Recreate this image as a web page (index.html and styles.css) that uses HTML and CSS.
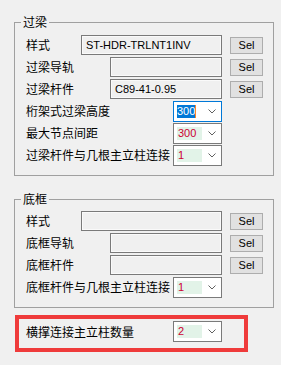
FILE: index.html
```html
<!DOCTYPE html>
<html lang="zh-CN">
<head>
    <meta charset="UTF-8">
    <title>过梁设置</title>
    <link rel="stylesheet" href="styles.css">
</head>
<body>
    <fieldset class="group">
        <legend>过梁</legend>
        <div class="row">
            <span class="label">样式</span>
            <div class="textbox wide">ST-HDR-TRLNT1INV</div>
            <button class="sel">Sel</button>
        </div>
        <div class="row">
            <span class="label">过梁导轨</span>
            <div class="textbox"></div>
            <button class="sel">Sel</button>
        </div>
        <div class="row">
            <span class="label">过梁杆件</span>
            <div class="textbox">C89-41-0.95</div>
            <button class="sel">Sel</button>
        </div>
        <div class="row">
            <span class="label">桁架式过梁高度</span>
            <div class="combo focused">
                <span class="value">300</span><span class="caret"></span>
                <svg class="arrow" width="8" height="5" viewBox="0 0 8 5"><path d="M0.5 0.5 L4 4 L7.5 0.5" fill="none" stroke="#606060" stroke-width="1"/></svg>
            </div>
        </div>
        <div class="row">
            <span class="label">最大节点间距</span>
            <div class="combo">
                <span class="value">300</span>
                <svg class="arrow" width="8" height="5" viewBox="0 0 8 5"><path d="M0.5 0.5 L4 4 L7.5 0.5" fill="none" stroke="#606060" stroke-width="1"/></svg>
            </div>
        </div>
        <div class="row">
            <span class="label">过梁杆件与几根主立柱连接</span>
            <div class="combo">
                <span class="value">1</span>
                <svg class="arrow" width="8" height="5" viewBox="0 0 8 5"><path d="M0.5 0.5 L4 4 L7.5 0.5" fill="none" stroke="#606060" stroke-width="1"/></svg>
            </div>
        </div>
    </fieldset>

    <fieldset class="group second">
        <legend>底框</legend>
        <div class="row">
            <span class="label">样式</span>
            <div class="textbox wide"></div>
            <button class="sel">Sel</button>
        </div>
        <div class="row">
            <span class="label">底框导轨</span>
            <div class="textbox"></div>
            <button class="sel">Sel</button>
        </div>
        <div class="row">
            <span class="label">底框杆件</span>
            <div class="textbox"></div>
            <button class="sel">Sel</button>
        </div>
        <div class="row">
            <span class="label">底框杆件与几根主立柱连接</span>
            <div class="combo">
                <span class="value">1</span>
                <svg class="arrow" width="8" height="5" viewBox="0 0 8 5"><path d="M0.5 0.5 L4 4 L7.5 0.5" fill="none" stroke="#606060" stroke-width="1"/></svg>
            </div>
        </div>
    </fieldset>

    <div class="highlight-box">
        <span class="label">横撑连接主立柱数量</span>
        <div class="combo">
            <span class="value">2</span>
            <svg class="arrow" width="8" height="5" viewBox="0 0 8 5"><path d="M0.5 0.5 L4 4 L7.5 0.5" fill="none" stroke="#606060" stroke-width="1"/></svg>
        </div>
    </div>
</body>
</html>
```

FILE: styles.css
```css
body {
    margin: 0;
    padding: 0 7px 0 14px;
    background-color: #f0f0f0;
    font-family: "Liberation Sans", "Noto Sans CJK SC", sans-serif;
    font-size: 12px;
    color: #000;
}
.group {
    margin: 14px 0 0 0;
    padding: 5px 10px 8px 11px;
    border: 1px solid #a0a0a0;
    min-width: 0;
}
/* 第二组框线低一像素 */
.group.second {
    margin-top: 15px;
    padding-top: 4px;
}
.group legend {
    margin-left: -5px;
    padding: 0 2px;
    line-height: 16px;
    font-family: "Noto Sans CJK SC", sans-serif;
}
.row {
    display: flex;
    align-items: flex-start;
    height: 22px;
}
.label {
    flex: 1;
    line-height: 20px;
    font-family: "Noto Sans CJK SC", sans-serif;
    white-space: nowrap;
}
.textbox {
    width: 112px;
    height: 20px;
    box-sizing: border-box;
    border: 1px solid #7a7a7a;
    box-shadow: inset 0 0 0 1px #fafafa;
    padding-left: 4px;
    font-size: 11px;
    line-height: 18px;
}
.textbox.wide {
    width: 141px;
}
.sel {
    width: 33px;
    height: 17px;
    margin: 2px 0 0 8px;
    padding: 0;
    background-color: #e1e1e1;
    border: 1px solid #adadad;
    font-family: "Liberation Sans", sans-serif;
    font-size: 11px;
    line-height: 15px;
    color: #000;
}
/* 下拉框 */
.combo {
    width: 49px;
    height: 21px;
    box-sizing: border-box;
    margin-right: 41px;
    border: 1px solid #7a7a7a;
    background-color: #fff;
    display: flex;
    align-items: center;
    padding-left: 3px;
}
.combo .value {
    width: 25px;
    height: 13px;
    background-color: #e2f3e8;
    color: #cc0033;
    font-size: 11px;
    line-height: 13px;
    padding-left: 1px;
    box-sizing: border-box;
}
.combo .arrow {
    margin-left: auto;
    margin-right: 5px;
}
.combo.focused {
    border-color: #0078d7;
}
.combo.focused .value {
    width: auto;
    background-color: #0078d7;
    color: #fff;
    padding-left: 0;
}
.combo.focused .caret {
    width: 1px;
    height: 13px;
    background-color: #ff8728;
}
.highlight-box {
    margin: 7px 26px 0 1px;
    padding: 2px 22px 6px 7px;
    border: 4px solid #ef3b3b;
    display: flex;
    align-items: center;
}
.highlight-box .label {
    line-height: 21px;
}
.highlight-box .combo {
    margin-right: 0;
}
```
